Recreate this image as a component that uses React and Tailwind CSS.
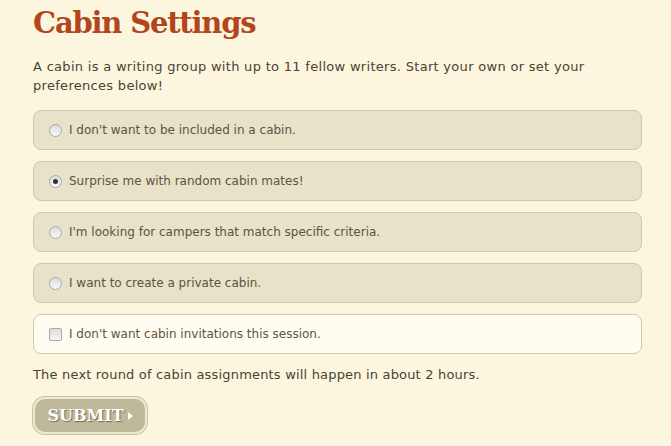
const OPTIONS = [
  { id: 'none', label: "I don't want to be included in a cabin." },
  { id: 'random', label: 'Surprise me with random cabin mates!' },
  { id: 'criteria', label: "I'm looking for campers that match specific criteria." },
  { id: 'private', label: 'I want to create a private cabin.' },
]

function Radio({ checked }) {
  return (
    <span className="flex size-[13px] shrink-0 items-center justify-center rounded-full border border-[#a9a9a9] bg-gradient-to-b from-[#dcdcdc] to-[#f8f8f8]">
      {checked ? <span className="size-[5px] rounded-full bg-[#333]" /> : null}
    </span>
  )
}

export default function App() {
  return (
    <div className="min-h-[446px] bg-[#fdf6df] pl-[33px] pr-[29px] pt-[4px] font-['DejaVu_Sans',Verdana,sans-serif] text-[#4b4331]">
      <h1 className="font-['DejaVu_Serif',Georgia,serif] text-[29px] font-bold leading-[38px] tracking-[-1.2px] text-[#b1461c]">
        Cabin Settings
      </h1>
      <p className="mt-[15px] text-[13px] leading-[19px] tracking-[0.3px]">
        A cabin is a writing group with up to 11 fellow writers. Start your own or set your preferences below!
      </p>
      <div className="mt-[15px] flex flex-col gap-[11px]">
        {OPTIONS.map((o) => (
          <div
            key={o.id}
            className="flex h-[40px] items-center gap-[7px] rounded-[8px] border border-[#d0c9ab] bg-[#e7e2c8] pl-[15px] text-[12px] text-[#5d5443]"
          >
            <Radio checked={o.id === 'random'} />
            <span>{o.label}</span>
          </div>
        ))}
        <div className="flex h-[40px] items-center gap-[7px] rounded-[8px] border border-[#d0c9ab] bg-[#fffcf1] pl-[15px] text-[12px] text-[#5d5443]">
          <span className="size-[13px] shrink-0 rounded-[2px] border border-[#a9a9a9] bg-gradient-to-b from-[#dcdcdc] to-[#f6f6f6]" />
          <span>I don't want cabin invitations this session.</span>
        </div>
      </div>
      <p className="mt-[11px] text-[13px] leading-[19px] tracking-[0.18px]">
        The next round of cabin assignments will happen in about 2 hours.
      </p>
      <button
        type="button"
        className="mt-[13px] flex h-[37px] w-[114px] items-center justify-center gap-[4px] rounded-[12px] border-2 border-[#efe9d2] bg-[#bfb99b] font-['DejaVu_Serif',Georgia,serif] text-[16px] font-bold text-white shadow-[0_0_0_1px_#c9c3a6] [text-shadow:1px_1px_1px_#6e6a56]"
      >
        SUBMIT
        <span className="mt-[1px] h-0 w-0 border-y-[4px] border-l-[5px] border-y-transparent border-l-white" />
      </button>
    </div>
  )
}
